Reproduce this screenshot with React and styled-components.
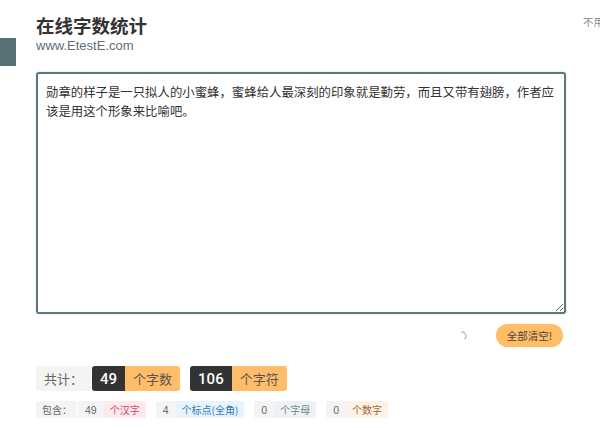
import styled, { createGlobalStyle } from "styled-components";

const GlobalStyle = createGlobalStyle`
  html, body {
    margin: 0;
    padding: 0;
    background: #fff;
    overflow: hidden;
  }
  body {
    font-family: "Noto Sans CJK SC", "Liberation Sans", sans-serif;
    color: #333;
  }
`;

const tones = {
  red: { bg: "#fde9ee", fg: "#d8475d" },
  blue: { bg: "#e8f3fc", fg: "#2f7db8" },
  gray: { bg: "#eef2f3", fg: "#6d898b" },
  amber: { bg: "#fdf3e8", fg: "#a4672c" },
};

const Page = styled.div`
  display: flex;
  align-items: flex-start;
  width: 600px;
  height: 428px;
  overflow: hidden;
`;

const SideTab = styled.div`
  flex: 0 0 16px;
  height: 28px;
  margin-top: 38px;
  background: #577177;
`;

const Main = styled.main`
  flex: 0 0 530px;
  margin-left: 20px;
  padding-top: 14px;
  display: flex;
  flex-direction: column;
`;

const Title = styled.h1`
  margin: 0;
  font-size: 18.5px;
  line-height: 22px;
  font-weight: 700;
  color: #333;
`;

const Domain = styled.div`
  margin-top: 2px;
  font-family: "Liberation Sans", Arial, sans-serif;
  font-size: 13px;
  line-height: 16px;
  color: #5e6d7c;
`;

const TextBox = styled.textarea`
  box-sizing: border-box;
  margin-top: 18px;
  width: 530px;
  height: 242px;
  padding: 9px 8px;
  border: 2px solid #5b787d;
  border-radius: 3px;
  box-shadow: 0 0 2px rgba(91, 120, 125, 0.35);
  font-family: "Noto Sans CJK SC", sans-serif;
  font-size: 12.4px;
  line-height: 18.5px;
  color: #333;
  outline: none;
  resize: vertical;
`;

const ActionRow = styled.div`
  margin-top: 10px;
  height: 23px;
  display: flex;
  justify-content: flex-end;
  align-items: center;
  gap: 29px;
  padding-right: 3px;
`;

const Spinner = styled.svg`
  width: 10px;
  height: 10px;
`;

const ClearButton = styled.button`
  width: 67px;
  height: 23px;
  border: none;
  border-radius: 12px;
  background: #ffbd67;
  color: #444;
  font-family: "Noto Sans CJK SC", sans-serif;
  font-size: 10.5px;
  padding: 0;
  cursor: pointer;
`;

const TotalRow = styled.div`
  margin-top: 19px;
  display: flex;
  height: 25px;
  gap: 10px;
`;

const Group = styled.div`
  display: flex;
  height: 100%;
`;

const TotalLabel = styled.div`
  display: flex;
  align-items: center;
  padding: 0 8px;
  margin-right: 1px;
  background: #f4f4f5;
  border-radius: 3px;
  font-size: 13px;
  color: #666;
`;

const Count = styled.div`
  display: flex;
  align-items: center;
  padding: 0 8px;
  background: #333;
  color: #fff;
  border-radius: 3px 0 0 3px;
  font-family: Roboto, "Liberation Sans", sans-serif;
  font-weight: 500;
  font-size: 15px;
`;

const Unit = styled.div`
  display: flex;
  align-items: center;
  padding: 0 8px;
  background: #ffbd6a;
  color: #555;
  border-radius: 0 3px 3px 0;
  font-size: 13px;
`;

const DetailRow = styled.div`
  margin-top: 10px;
  display: flex;
  height: 17px;
  gap: 10px;
`;

const DetailLabel = styled.div`
  display: flex;
  align-items: center;
  padding: 0 5px 0 6px;
  margin-right: 1px;
  background: #f4f4f5;
  border-radius: 2px;
  font-size: 10px;
  color: #666;
`;

const DetailNum = styled.div`
  display: flex;
  align-items: center;
  padding: 0 7px;
  background: #f4f4f6;
  border-radius: 2px 0 0 2px;
  font-family: "Liberation Sans", sans-serif;
  font-size: 10.5px;
  color: #666;
`;

const DetailUnit = styled.div`
  display: flex;
  align-items: center;
  padding: 0 6px;
  background: ${({ $tone }) => tones[$tone].bg};
  color: ${({ $tone }) => tones[$tone].fg};
  border-radius: 0 2px 2px 0;
  font-size: 10px;
`;

const SideNote = styled.div`
  flex: 0 0 auto;
  margin-left: 17px;
  margin-top: 14px;
  font-size: 10.5px;
  color: #888;
  white-space: nowrap;
`;

const sample =
  "勋章的样子是一只拟人的小蜜蜂，蜜蜂给人最深刻的印象就是勤劳，而且又带有翅膀，作者应该是用这个形象来比喻吧。";

const details = [
  { num: 49, unit: "个汉字", tone: "red" },
  { num: 4, unit: "个标点(全角)", tone: "blue" },
  { num: 0, unit: "个字母", tone: "gray" },
  { num: 0, unit: "个数字", tone: "amber" },
];

export default function App() {
  return (
    <>
      <GlobalStyle />
      <Page>
        <SideTab />
        <Main>
          <Title>在线字数统计</Title>
          <Domain>www.EtestE.com</Domain>
          <TextBox defaultValue={sample} spellCheck={false} />
          <ActionRow>
            <Spinner viewBox="0 0 10 10">
              <path
                d="M5 1 A4 4 0 0 1 7.8 7.8"
                fill="none"
                stroke="#b9b9b9"
                strokeWidth="1.3"
                strokeLinecap="round"
              />
            </Spinner>
            <ClearButton>全部清空!</ClearButton>
          </ActionRow>
          <TotalRow>
            <Group>
              <TotalLabel>共计：</TotalLabel>
              <Count>49</Count>
              <Unit>个字数</Unit>
            </Group>
            <Group>
              <Count>106</Count>
              <Unit>个字符</Unit>
            </Group>
          </TotalRow>
          <DetailRow>
            {details.map((d, i) => (
              <Group key={d.unit}>
                {i === 0 && <DetailLabel>包含：</DetailLabel>}
                <DetailNum>{d.num}</DetailNum>
                <DetailUnit $tone={d.tone}>{d.unit}</DetailUnit>
              </Group>
            ))}
          </DetailRow>
        </Main>
        <SideNote>不用</SideNote>
      </Page>
    </>
  );
}
